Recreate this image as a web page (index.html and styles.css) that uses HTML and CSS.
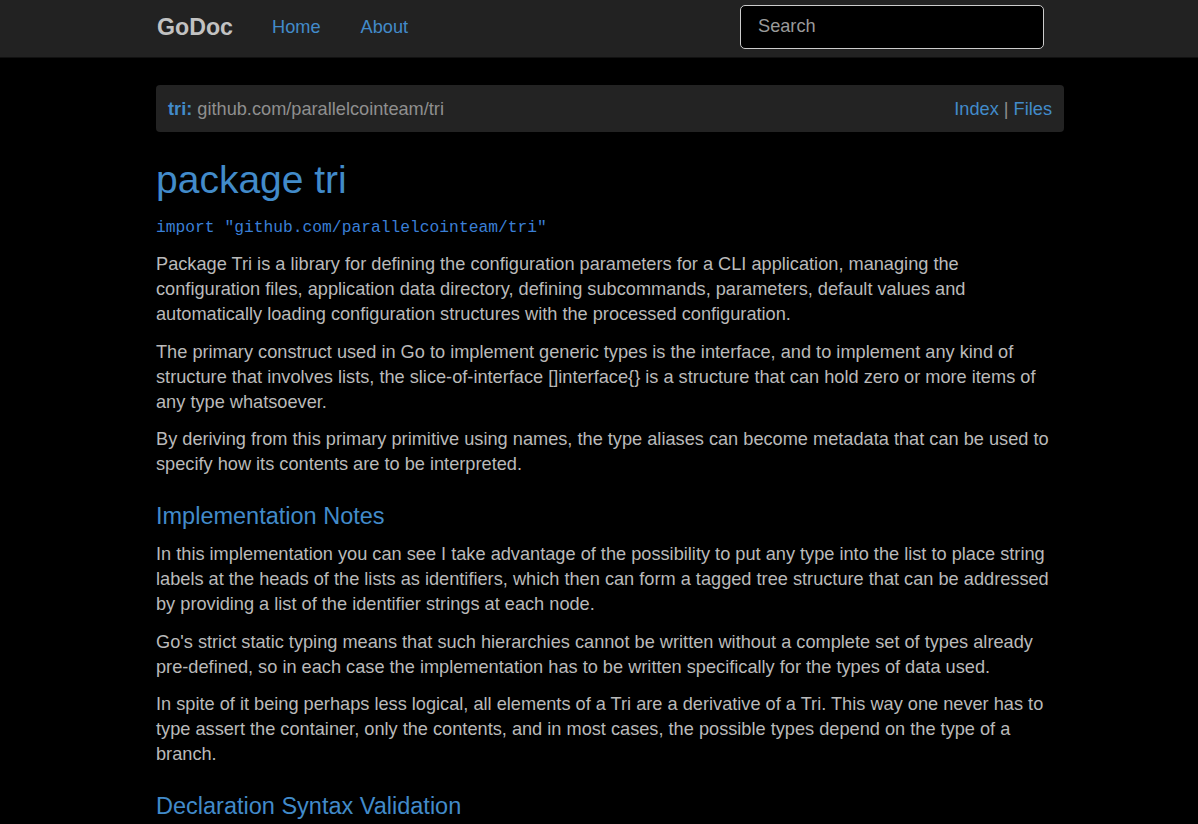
FILE: index.html
```html
<!DOCTYPE html>
<html>
<head>
<meta charset="utf-8">
<title>tri - GoDoc</title>
<link rel="stylesheet" href="styles.css">
</head>
<body>
<nav class="navbar">
  <div class="container nav-inner">
    <a class="brand" href="#">GoDoc</a>
    <a class="nav-link" href="#">Home</a>
    <a class="nav-link" href="#">About</a>
    <div class="spacer"></div>
    <input class="search" type="text" placeholder="Search">
  </div>
</nav>
<main class="container">
  <div class="crumb">
    <div><a class="crumb-pkg" href="#">tri:</a> <span class="crumb-path">github.com/parallelcointeam/tri</span></div>
    <div class="crumb-links"><a href="#">Index</a> <span class="sep">|</span> <a href="#">Files</a></div>
  </div>
  <h1>package tri</h1>
  <p class="import"><code>import "github.com/parallelcointeam/tri"</code></p>
  <p>Package Tri is a library for defining the configuration parameters for a CLI application, managing the configuration files, application data directory, defining subcommands, parameters, default values and automatically loading configuration structures with the processed configuration.</p>
  <p>The primary construct used in Go to implement generic types is the interface, and to implement any kind of structure that involves lists, the slice-of-interface []interface{} is a structure that can hold zero or more items of any type whatsoever.</p>
  <p>By deriving from this primary primitive using names, the type aliases can become metadata that can be used to specify how its contents are to be interpreted.</p>
  <h2>Implementation Notes</h2>
  <p>In this implementation you can see I take advantage of the possibility to put any type into the list to place string labels at the heads of the lists as identifiers, which then can form a tagged tree structure that can be addressed by providing a list of the identifier strings at each node.</p>
  <p>Go's strict static typing means that such hierarchies cannot be written without a complete set of types already pre-defined, so in each case the implementation has to be written specifically for the types of data used.</p>
  <p>In spite of it being perhaps less logical, all elements of a Tri are a derivative of a Tri. This way one never has to type assert the container, only the contents, and in most cases, the possible types depend on the type of a branch.</p>
  <h2>Declaration Syntax Validation</h2>
</main>
</body>
</html>
```
FILE: styles.css
```css
html, body {
  margin: 0;
  padding: 0;
  background: #000;
}
body {
  font-family: "Liberation Sans", Arial, sans-serif;
  font-size: 18.2px;
  line-height: 25px;
  color: #bababa;
}
a {
  color: #428bca;
  text-decoration: none;
}
.container {
  width: 908px;
  margin-left: 156px;
}
.navbar {
  background: #222;
  height: 58px;
  border-bottom: 1px solid #111;
  box-sizing: border-box;
}
.nav-inner {
  display: flex;
  align-items: center;
  height: 57px;
  padding-bottom: 2px;
  box-sizing: border-box;
}
.brand {
  color: #c2c2c2;
  font-weight: bold;
  font-size: 23.2px;
  margin-right: 39px;
  padding-left: 1px;
}
.nav-link {
  font-size: 18.2px;
  margin-right: 40px;
}
.spacer {
  flex: 1;
}
.search {
  width: 304px;
  height: 44px;
  box-sizing: border-box;
  margin-right: 20px;
  margin-top: -1px;
  background: #000;
  border: 1px solid #ccc;
  border-radius: 5px;
  color: #ddd;
  font-family: "Liberation Sans", Arial, sans-serif;
  font-size: 18.2px;
  padding: 0 17px 1px;
  outline: none;
}
.search::placeholder {
  color: #9a9a9a;
}
.crumb {
  margin-top: 27px;
  background: #232323;
  border-radius: 4px;
  height: 47px;
  padding: 1px 12px 0;
  box-sizing: border-box;
  display: flex;
  align-items: center;
  justify-content: space-between;
  font-size: 18.2px;
}
.crumb-pkg {
  font-weight: bold;
}
.crumb-path {
  color: #8f8f8f;
}
.sep {
  color: #8f8f8f;
}
h1 {
  font-size: 39px;
  font-weight: normal;
  color: #428bca;
  line-height: 46px;
  margin: 25px 0 11px;
}
h2 {
  font-size: 23.5px;
  font-weight: normal;
  color: #428bca;
  line-height: 30px;
  margin: 24px 0 11px;
}
p {
  margin: 0 0 12.5px;
}
.import {
  margin-bottom: 12px;
}
code {
  font-family: "Liberation Mono", "Courier New", monospace;
  font-size: 16.3px;
  color: #3a7fd6;
}
```
